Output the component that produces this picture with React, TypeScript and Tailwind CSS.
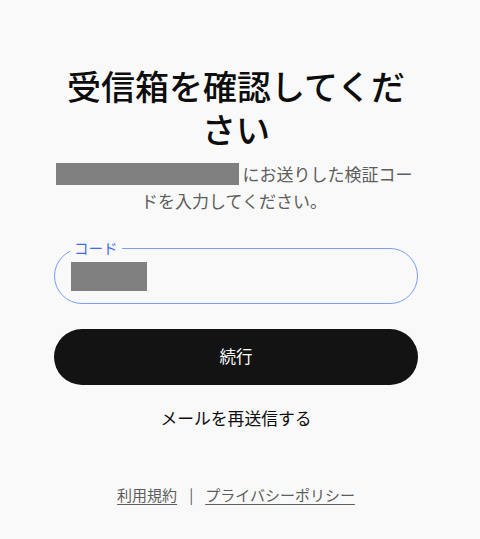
const font = "font-['Noto_Sans_CJK_JP','Noto_Sans',sans-serif]";

const VerifyEmailPage = () => {
  return (
    <div className={`min-h-[539px] bg-[#f9f9f9] ${font}`}>
      <div className="ml-[54px] w-[364px] pt-[64px] flex flex-col items-center">
        <h1 className="w-[360px] text-center text-[34px] leading-[43px] font-medium text-[#0d0d0d]">
          受信箱を確認してください
        </h1>
        <p className="mt-[10px] -ml-[4px] text-center text-[17px] leading-[27px] text-[#5d5d5d]">
          <span className="inline-block w-[183px] h-[22px] bg-[#808080] align-[-4px]"></span>
          {' '}にお送りした検証コードを入力してください。
        </p>

        <div className="relative mt-[34px] w-full h-[56px] rounded-full border border-[#7b9cf8] flex items-center pl-[16px]">
          <span className="absolute left-[15px] -top-[12px] px-[4px] bg-[#f9f9f9] text-[14.5px] leading-[22px] text-[#4169f5]">
            コード
          </span>
          <span className="block w-[76px] h-[29px] bg-[#808080]"></span>
        </div>

        <button className="mt-[25px] w-full h-[56px] rounded-full bg-[#131313] text-white text-[16.5px] leading-[24px]">
          <span className="relative -top-[1px]">続行</span>
        </button>

        <button className="mt-[21px] text-[16.8px] leading-[24px] text-[#0d0d0d]">
          メールを再送信する
        </button>

        <div className="mt-[54px] flex items-center gap-[12px] text-[15px] leading-[22px] text-[#5d5d5d]">
          <a href="#" className="underline underline-offset-[3px]">利用規約</a>
          <span>|</span>
          <a href="#" className="underline underline-offset-[3px]">プライバシーポリシー</a>
        </div>
      </div>
    </div>
  );
};

export default function App() {
  return <VerifyEmailPage />;
}
